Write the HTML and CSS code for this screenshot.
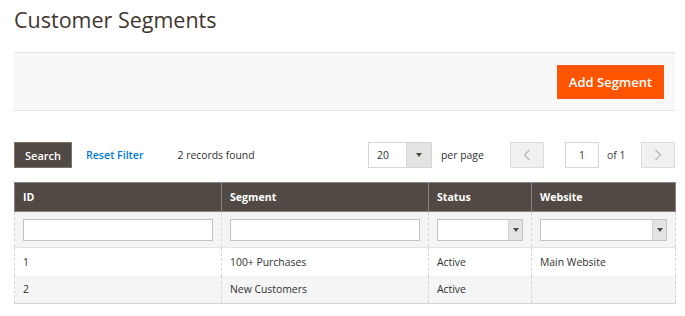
FILE: index.html
```html
<!DOCTYPE html>
<html lang="en">
<head>
<meta charset="utf-8">
<title>Customer Segments</title>
<link rel="stylesheet" href="styles.css">
</head>
<body>
<div class="page">
  <h1 class="page-title">Customer Segments</h1>
  <div class="page-actions">
    <button class="btn-primary" type="button">Add Segment</button>
  </div>
  <div class="toolbar">
    <div class="toolbar-left">
      <button class="btn-search" type="button">Search</button>
      <a class="reset-link" href="#">Reset Filter</a>
      <span class="records">2 records found</span>
    </div>
    <div class="toolbar-right">
      <div class="perpage">
        <span class="perpage-value">20</span>
        <span class="perpage-arrow"><span class="tri"></span></span>
      </div>
      <span class="perpage-label">per page</span>
      <button class="pager-btn pager-prev" type="button" aria-label="Previous">
        <svg width="8" height="12" viewBox="0 0 8 12"><path d="M6.5 1 L1.5 6 L6.5 11" fill="none" stroke="#b5b5b5" stroke-width="1.2"/></svg>
      </button>
      <span class="page-input">1</span>
      <span class="page-of">of 1</span>
      <button class="pager-btn pager-next" type="button" aria-label="Next">
        <svg width="8" height="12" viewBox="0 0 8 12"><path d="M1.5 1 L6.5 6 L1.5 11" fill="none" stroke="#b5b5b5" stroke-width="1.2"/></svg>
      </button>
    </div>
  </div>
  <table class="grid">
    <colgroup>
      <col class="c-id"><col class="c-seg"><col class="c-status"><col class="c-web">
    </colgroup>
    <thead>
      <tr class="head">
        <th>ID</th><th>Segment</th><th>Status</th><th>Website</th>
      </tr>
      <tr class="filters">
        <td><span class="f-input"></span></td>
        <td><span class="f-input"></span></td>
        <td><span class="f-select"><span class="f-arrow"><span class="tri"></span></span></span></td>
        <td><span class="f-select"><span class="f-arrow"><span class="tri"></span></span></span></td>
      </tr>
    </thead>
    <tbody>
      <tr class="row">
        <td>1</td><td>100+ Purchases</td><td>Active</td><td>Main Website</td>
      </tr>
      <tr class="row alt">
        <td>2</td><td>New Customers</td><td>Active</td><td></td>
      </tr>
    </tbody>
  </table>
</div>
</body>
</html>
```
FILE: styles.css
```css
* { box-sizing: border-box; }
html, body { margin: 0; padding: 0; background: #fff; }
body {
  font-family: "Open Sans", "Liberation Sans", sans-serif;
  color: #303030;
  font-size: 10.4px;
}
.page { padding: 0 10px 0 14px; }

.page-title {
  margin: 0;
  padding-top: 5px;
  height: 52px;
  font-size: 21.5px;
  font-weight: 400;
  line-height: 30px;
  color: #41362f;
}

.page-actions {
  display: flex;
  justify-content: flex-end;
  align-items: center;
  height: 59px;
  padding-right: 11px;
  background: #f8f8f8;
  border-top: 1px solid #e3e3e3;
  border-bottom: 1px solid #e3e3e3;
}
.btn-primary {
  height: 34px;
  width: 107px;
  padding: 0;
  background: #ff5501;
  border: 1px solid #f25a14;
  color: #fff;
  font-family: inherit;
  font-size: 13px;
  font-weight: 600;
  cursor: pointer;
}

.toolbar {
  margin-top: 31px;
  display: flex;
  justify-content: space-between;
  align-items: center;
  height: 26px;
}
.toolbar-left, .toolbar-right { display: flex; align-items: center; height: 26px; }
.btn-search {
  height: 26px;
  width: 58px;
  padding: 0;
  background: #514943;
  border: 1px solid #7b726c;
  color: #fff;
  font-family: inherit;
  font-size: 11px;
  font-weight: 600;
}
.reset-link {
  margin-left: 14px;
  color: #007bdb;
  text-decoration: none;
  font-size: 10.6px;
  font-weight: 600;
}
.records { margin-left: 34px; }

.perpage {
  display: flex;
  width: 64px;
  height: 26px;
  border: 1px solid #d6d6d6;
  background: #fff;
}
.perpage-value { flex: 1; padding-left: 8px; line-height: 24px; }
.perpage-arrow {
  width: 25px;
  background: #e3e3e3;
  border-left: 1px solid #d6d6d6;
  display: flex;
  align-items: center;
  justify-content: center;
}
.tri {
  width: 0; height: 0;
  border-left: 3.5px solid transparent;
  border-right: 3.5px solid transparent;
  border-top: 4px solid #514943;
}
.perpage-label { margin-left: 9px; width: 69px; }
.pager-btn {
  width: 34px;
  height: 26px;
  padding: 0;
  background: #f0f0f0;
  border: 1px solid #dcdcdc;
  display: flex;
  align-items: center;
  justify-content: center;
}
.page-input {
  margin-left: 21px;
  width: 34px;
  height: 26px;
  border: 1px solid #d6d6d6;
  text-align: center;
  line-height: 24px;
}
.page-of { margin-left: 8px; width: 34px; color: #41362f; }

.grid {
  margin-top: 14px;
  width: 661px;
  border-collapse: collapse;
  table-layout: fixed;
}
.c-id { width: 207px; }
.c-seg { width: 207px; }
.c-status { width: 103px; }
.c-web { width: 144px; }
.head th {
  height: 29px;
  background: #514943;
  color: #fff;
  font-weight: 700;
  font-size: 10.6px;
  text-align: left;
  padding: 0 8px;
  border: 1px solid #8a837f;
}
.filters td {
  height: 36px;
  background: #f4f4f4;
  padding: 0 8px;
  border-left: 1px dashed #d6d6d6;
  border-right: 1px dashed #d6d6d6;
  border-bottom: 1px solid #e3e3e3;
  vertical-align: middle;
}
.f-input, .f-select {
  display: block;
  height: 22px;
  background: #fff;
  border: 1px solid #c2c2c2;
}
.f-select { display: flex; justify-content: flex-end; }
.f-arrow {
  width: 14px;
  background: #e3e3e3;
  border-left: 1px solid #d6d6d6;
  display: flex;
  align-items: center;
  justify-content: center;
}
.row td {
  height: 28px;
  padding: 0 8px;
  border-left: 1px dashed #d6d6d6;
  border-right: 1px dashed #d6d6d6;
  background: #fff;
}
.row.alt td { background: #f5f5f5; border-bottom: 1px solid #d6d6d6; }
```
